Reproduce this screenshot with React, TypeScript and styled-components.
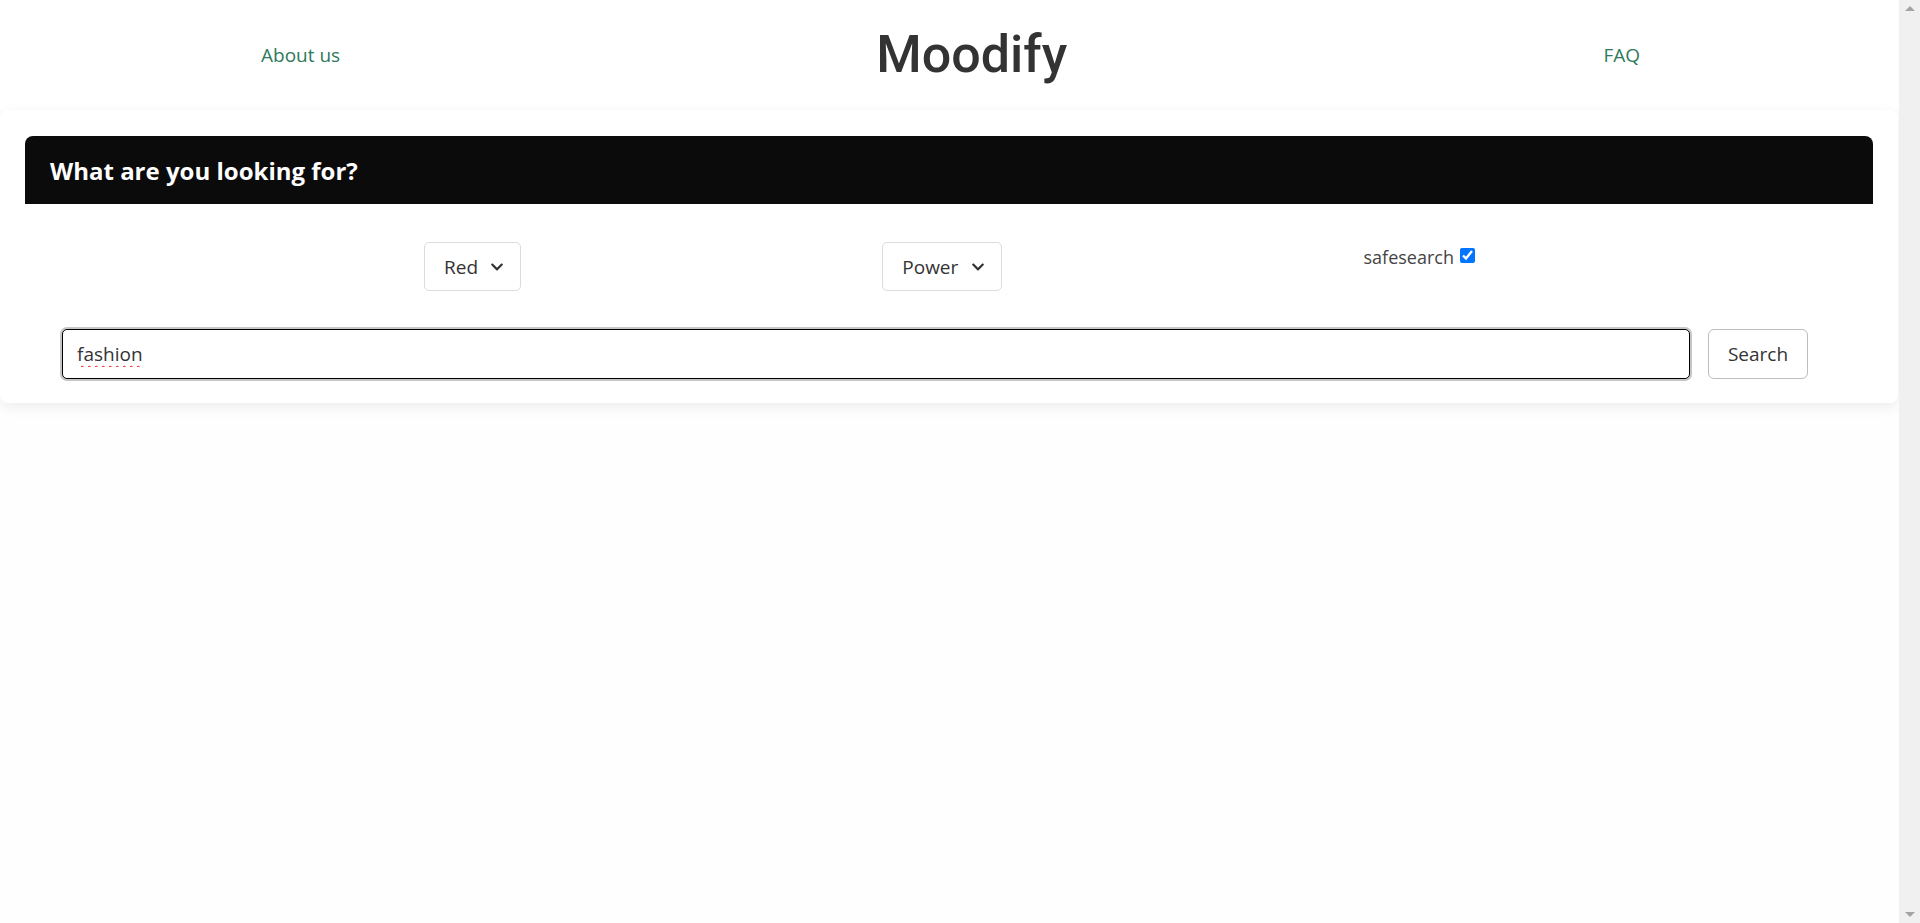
import React from "react";
import styled, { createGlobalStyle } from "styled-components";
import { FaChevronDown } from "react-icons/fa";

const GlobalStyle = createGlobalStyle`
  html, body {
    margin: 0;
    padding: 0;
  }
  body {
    background: #fefefe;
    font-family: "Segoe UI", "Open Sans", "Noto Sans", sans-serif;
    color: #333;
  }
  * { box-sizing: border-box; }
`;

const Shell = styled.div`
  display: flex;
  height: 100vh;
  overflow: hidden;
`;

const Page = styled.div`
  flex: 1;
  display: flex;
  flex-direction: column;
  min-width: 0;
`;

const NavBar = styled.nav`
  height: 110px;
  background: #fff;
  display: flex;
  align-items: center;
  justify-content: space-between;
  padding: 0 259px 0 261px;
`;

const NavLink = styled.a`
  font-family: "Open Sans", sans-serif;
  font-size: 19px;
  color: #2f7a5c;
  text-decoration: none;
  line-height: 1.5;
`;

const Brand = styled.h1`
  margin: 0;
  font-family: Roboto, "Open Sans", sans-serif;
  font-weight: 500;
  font-size: 52px;
  line-height: 1.2;
  color: #333;
`;

const Card = styled.section`
  background: #fff;
  margin-right: 1px;
  border-radius: 8px;
  box-shadow: 0 4px 14px rgba(0, 0, 0, 0.07);
  padding: 26px 25px 24px;
`;

const CardHeader = styled.div`
  height: 68px;
  background: #0b0b0b;
  border-radius: 8px 8px 0 0;
  display: flex;
  align-items: center;
  padding-left: 25px;
`;

const Title = styled.h4`
  margin: 0;
  font-family: "Open Sans", sans-serif;
  font-weight: 700;
  font-size: 24px;
  color: #fff;
`;

const FilterRow = styled.div`
  display: flex;
  justify-content: space-between;
  align-items: flex-start;
  padding: 38px 398px 0 399px;
`;

const SelectWrap = styled.div<{ $w: number }>`
  position: relative;
  width: ${(p) => p.$w}px;
`;

const Select = styled.select`
  appearance: none;
  -webkit-appearance: none;
  width: 100%;
  height: 49px;
  padding: 0 0 0 19px;
  border: 1px solid #dcdcdc;
  border-radius: 5px;
  background: #fff;
  font-family: "Open Sans", sans-serif;
  font-size: 19px;
  color: #333;
  outline: none;
`;

const Chevron = styled.span`
  position: absolute;
  right: 17px;
  top: 50%;
  transform: translateY(-50%);
  display: flex;
  color: #333;
  pointer-events: none;
`;

const SafeLabel = styled.label`
  display: flex;
  align-items: center;
  gap: 6px;
  height: 30px;
  font-family: "Open Sans", sans-serif;
  font-size: 18px;
  color: #444;
`;

const Check = styled.input`
  width: 15px;
  height: 15px;
  margin: 0;
  position: relative;
  top: -2px;
`;

const SearchRow = styled.div`
  display: flex;
  align-items: center;
  gap: 18px;
  padding: 38px 65px 0 37px;
`;

const SearchInput = styled.input`
  flex: 1;
  height: 50px;
  border: 1px solid #000;
  border-radius: 5px;
  box-shadow: 0 0 0 2px #c6c6c6;
  padding: 0 14px;
  font-family: "Open Sans", sans-serif;
  font-size: 19px;
  color: #333;
  text-decoration: underline wavy #e11;
  text-underline-offset: 4px;
  text-decoration-thickness: 1px;
  outline: none;
`;

const SearchButton = styled.button`
  width: 100px;
  height: 50px;
  border: 1px solid #bdbdbd;
  border-radius: 6px;
  background: #fff;
  font-family: "Open Sans", sans-serif;
  font-size: 19px;
  color: #333;
  padding: 0;
`;

const Scrollbar = styled.div`
  width: 21px;
  flex: none;
  background: #f0f0f0;
  display: flex;
  flex-direction: column;
  justify-content: space-between;
  align-items: center;
  padding: 6px 0;
`;

const Arrow = styled.div<{ $down?: boolean }>`
  width: 0;
  height: 0;
  border-left: 5px solid transparent;
  border-right: 5px solid transparent;
  ${(p) =>
    p.$down
      ? "border-top: 5px solid #a3a3a3;"
      : "border-bottom: 5px solid #a3a3a3;"}
`;

export default function App() {
  return (
    <>
      <GlobalStyle />
      <Shell>
        <Page>
          <NavBar>
            <NavLink href="#">About us</NavLink>
            <Brand>Moodify</Brand>
            <NavLink href="#">FAQ</NavLink>
          </NavBar>
          <Card>
            <CardHeader>
              <Title>What are you looking for?</Title>
            </CardHeader>
            <FilterRow>
              <SelectWrap $w={97}>
                <Select defaultValue="red">
                  <option value="red">Red</option>
                </Select>
                <Chevron>
                  <FaChevronDown size={14} />
                </Chevron>
              </SelectWrap>
              <SelectWrap $w={120}>
                <Select defaultValue="power">
                  <option value="power">Power</option>
                </Select>
                <Chevron>
                  <FaChevronDown size={14} />
                </Chevron>
              </SelectWrap>
              <SafeLabel>
                safesearch
                <Check type="checkbox" defaultChecked />
              </SafeLabel>
            </FilterRow>
            <SearchRow>
              <SearchInput defaultValue="fashion" spellCheck={false} />
              <SearchButton>Search</SearchButton>
            </SearchRow>
          </Card>
        </Page>
        <Scrollbar>
          <Arrow />
          <Arrow $down />
        </Scrollbar>
      </Shell>
    </>
  );
}
